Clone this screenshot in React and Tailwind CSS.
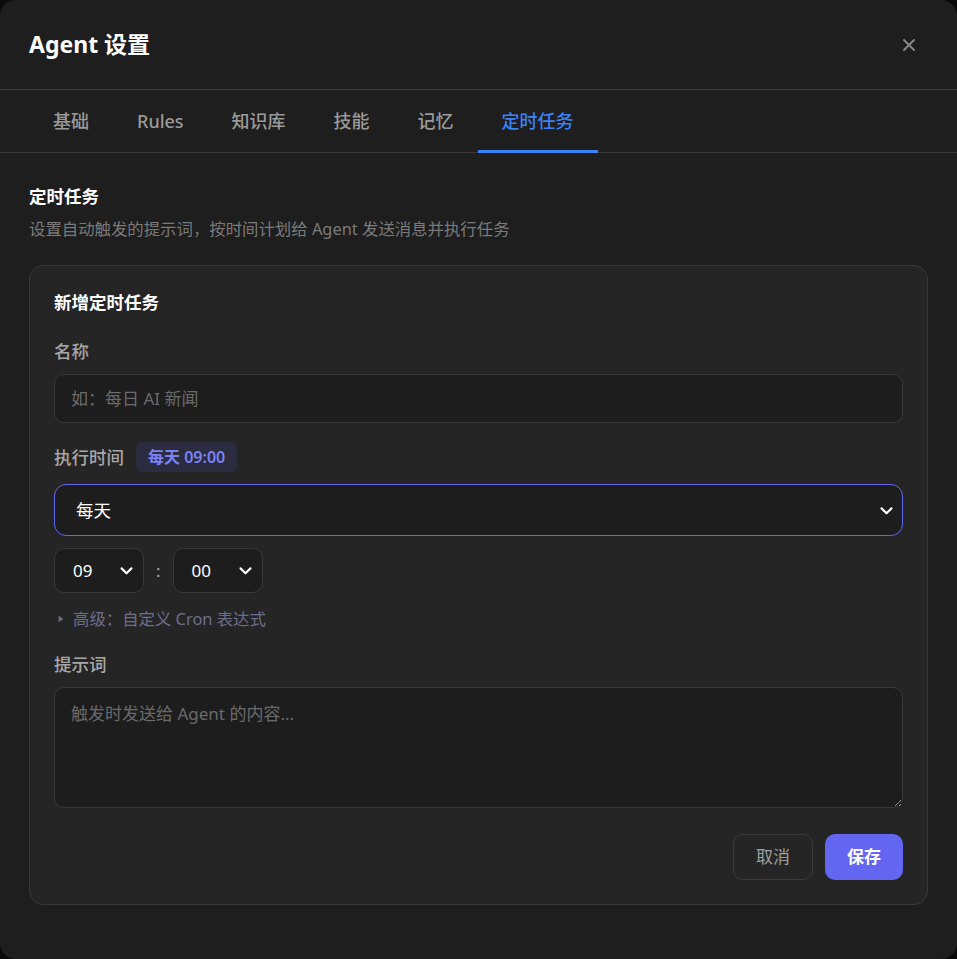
import React from 'react';

const font = { fontFamily: '"Noto Sans", "Noto Sans CJK SC", sans-serif' };

const Chevron = ({ className = '' }) => (
    <svg viewBox="0 0 24 24" className={className} fill="none" stroke="currentColor" strokeWidth="3" strokeLinecap="round" strokeLinejoin="round">
        <path d="M5 9l7 7 7-7" />
    </svg>
);

const tabs = ['基础', 'Rules', '知识库', '技能', '记忆', '定时任务'];

const TimeSelect = ({ value }) => (
    <div className="flex h-[45px] w-[90px] items-center justify-between rounded-[10px] border border-[#383838] bg-[#1d1d1d] pl-[18px] pr-[8px] text-[17px] text-white">
        <span>{value}</span>
        <Chevron className="h-[17px] w-[17px] text-white" />
    </div>
);

const App = () => {
    return (
        <div className="min-h-[959px] bg-[#0b0b0b]" style={font}>
            <div className="flex h-[959px] w-[957px] flex-col rounded-[16px] bg-[#1e1e1e]">
                <div className="flex h-[90px] items-center justify-between border-b border-[#3a3a3a] pl-[29px] pr-[38px]">
                    <h1 className="text-[23px] font-bold text-white">Agent 设置</h1>
                    <svg viewBox="0 0 24 24" className="h-[20px] w-[20px] text-[#8a8a8a]" fill="none" stroke="currentColor" strokeWidth="2.2" strokeLinecap="round">
                        <path d="M6 6l12 12M18 6L6 18" />
                    </svg>
                </div>

                <div className="flex h-[63px] border-b border-[#3a3a3a] pl-[29px]">
                    {tabs.map((t, i) => {
                        const active = i === tabs.length - 1;
                        return (
                            <div
                                key={t}
                                className={
                                    active
                                        ? 'flex items-center border-b-[3px] border-[#3b82f6] px-6 pt-[3px] text-[18px] font-medium text-[#3b82f6] -mb-px'
                                        : 'flex items-center border-b-[3px] border-transparent px-6 pt-[3px] text-[18px] font-medium text-[#9a9a9a] -mb-px'
                                }
                            >
                                {t}
                            </div>
                        );
                    })}
                </div>

                <div className="px-[29px] pt-[31px]">
                    <h2 className="text-[17.5px] font-bold leading-[24px] text-white">定时任务</h2>
                    <p className="mt-[9px] text-[16.4px] leading-[24px] text-[#7a7a7a]">
                        设置自动触发的提示词，按时间计划给 Agent 发送消息并执行任务
                    </p>

                    <div className="mt-[24px] rounded-[14px] border border-[#383838] bg-[#252525] p-6">
                        <h3 className="text-[17.5px] font-bold leading-[24px] text-white">新增定时任务</h3>

                        <div className="mt-[25px] text-[17.5px] font-medium leading-[24px] text-[#a8a8a8]">名称</div>
                        <div className="mt-[11px] flex h-[49px] items-center rounded-[10px] border border-[#383838] bg-[#1d1d1d] px-4 text-[17px] text-[#6a6a6a]">
                            如：每日 AI 新闻
                        </div>

                        <div className="mt-[19px] flex h-[30px] items-center gap-3">
                            <span className="text-[17.5px] font-medium text-[#a8a8a8]">执行时间</span>
                            <span className="flex h-[30px] items-center rounded-[6px] bg-[#2c2c40] px-3 text-[16px] font-semibold text-[#7b82f4]">
                                每天 09:00
                            </span>
                        </div>

                        <div className="mt-[12px] flex h-[52px] items-center justify-between rounded-[12px] border border-[#6366f1] bg-[#1d1d1d] pl-[21px] pr-[7px] text-[17.5px] text-white">
                            <span>每天</span>
                            <Chevron className="h-[17px] w-[17px] text-white" />
                        </div>

                        <div className="mt-[12px] flex items-center gap-[12px]">
                            <TimeSelect value="09" />
                            <span className="text-[17px] text-[#a8a8a8]">:</span>
                            <TimeSelect value="00" />
                        </div>

                        <div className="mt-[14px] flex h-[24px] items-center gap-[8px] text-[16.4px] text-[#6d6d8c]">
                            <svg viewBox="0 0 10 10" className="ml-[3px] h-[8px] w-[8px]" fill="currentColor">
                                <path d="M2 1l6 4-6 4z" />
                            </svg>
                            <span>高级：自定义 Cron 表达式</span>
                        </div>

                        <div className="mt-[21px] text-[17.5px] font-medium leading-[24px] text-[#a8a8a8]">提示词</div>
                        <textarea
                            className="mt-[11px] block h-[121px] w-full rounded-[10px] border border-[#383838] bg-[#1d1d1d] px-4 py-[13px] text-[17px] leading-[26px] text-white placeholder-[#6a6a6a] outline-none"
                            placeholder="触发时发送给 Agent 的内容..."
                            style={font}
                        />

                        <div className="mt-[26px] flex justify-end gap-3">
                            <button className="h-[46px] w-[80px] rounded-[10px] border border-[#3a3a3a] text-[17px] text-[#a0a0a0]">
                                取消
                            </button>
                            <button className="h-[46px] w-[78px] rounded-[10px] bg-[#6366f1] text-[17px] font-semibold text-white">
                                保存
                            </button>
                        </div>
                    </div>
                </div>
            </div>
        </div>
    );
};

export default App;
